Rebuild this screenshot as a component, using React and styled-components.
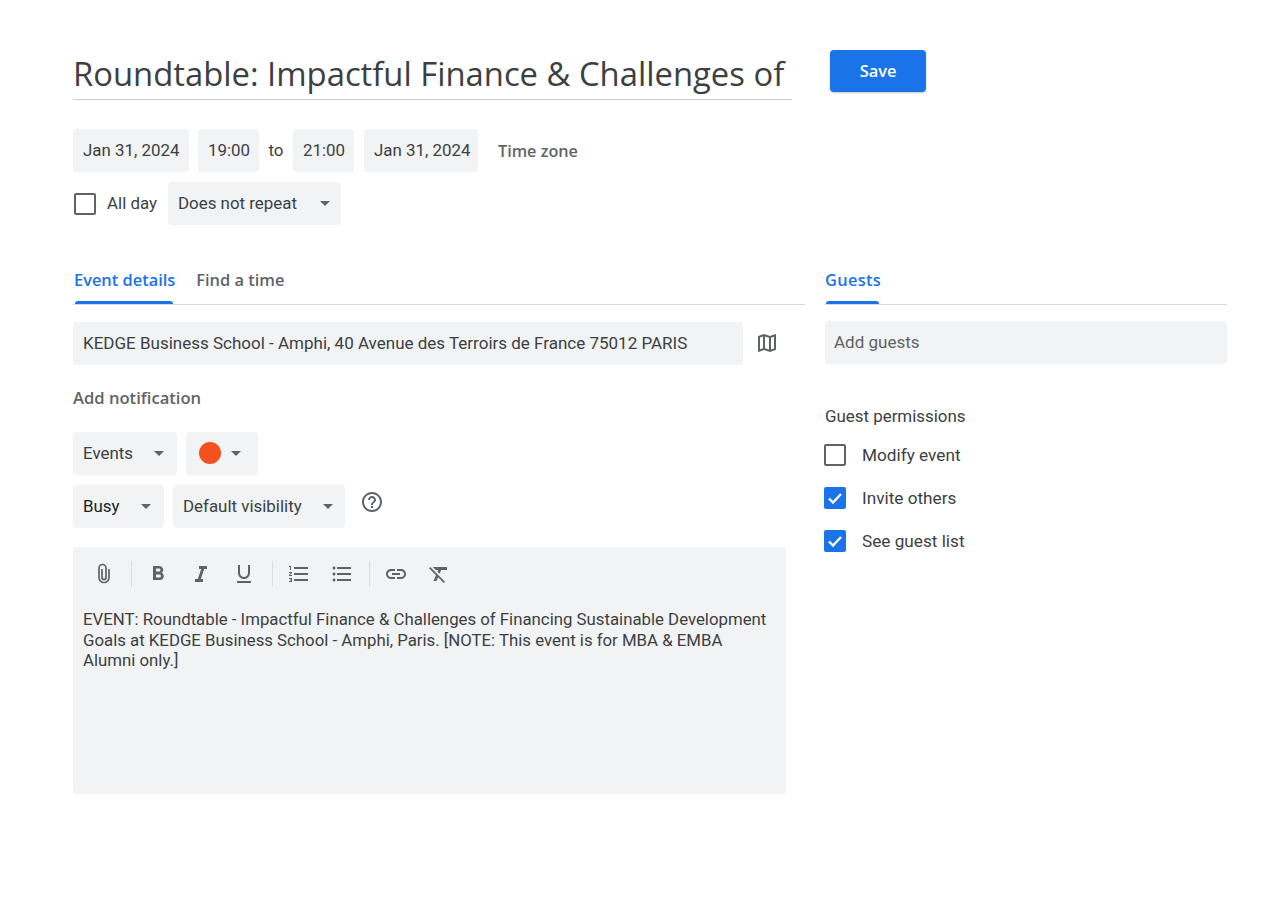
import React from 'react';
import styled, { createGlobalStyle } from 'styled-components';

const Global = createGlobalStyle`
  html, body { margin: 0; background: #fff; }
  body { font-family: Roboto, "Liberation Sans", sans-serif; color: #3c4043; }
`;

const Page = styled.div`
  width: 1285px;
  height: 900px;
  box-sizing: border-box;
  padding: 50px 58px 0 73px;
  overflow: hidden;
`;

const TitleRow = styled.div`
  display: flex;
  align-items: flex-start;
  gap: 38px;
`;

const Title = styled.div`
  width: 719px;
  height: 50px;
  box-sizing: border-box;
  border-bottom: 1px solid #c9cccf;
  font-family: "Open Sans", sans-serif;
  font-size: 32.8px;
  line-height: 47px;
  color: #3c4043;
  white-space: nowrap;
  overflow: hidden;
`;

const SaveButton = styled.button`
  width: 96px;
  height: 42px;
  border: 0;
  border-radius: 4px;
  background: #1a73e8;
  color: #fff;
  font-family: "Open Sans", sans-serif;
  font-size: 16.4px;
  font-weight: 600;
  padding: 0 0 2px;
  box-shadow: 0 1px 2px rgba(60, 64, 67, 0.3);
`;

const Row = styled.div`
  display: flex;
  align-items: center;
  gap: ${p => p.$gap ?? 9}px;
  margin-top: ${p => p.$top || 0}px;
`;

const Chip = styled.div`
  display: flex;
  align-items: center;
  justify-content: space-between;
  box-sizing: border-box;
  width: ${p => p.$w}px;
  height: 43px;
  margin-left: ${p => p.$left || 0}px;
  padding: 0 10px 1px 10px;
  background: #f1f3f4;
  border-radius: 4px;
  font-size: 16.9px;
  color: ${p => p.$dark ? '#202124' : '#3c4043'};
  white-space: nowrap;
`;

const Caret = styled.span`
  width: 0;
  height: 0;
  border-left: 5px solid transparent;
  border-right: 5px solid transparent;
  border-top: 5px solid #5f6368;
  margin-right: ${p => p.$right || 2}px;
`;

const To = styled.span`
  font-size: 16.9px;
  width: 16px;
  text-align: center;
  padding-bottom: 2px;
`;

const TextAction = styled.span`
  font-family: "Open Sans", sans-serif;
  font-size: 16.2px;
  font-weight: 600;
  color: #5f6368;
  margin-left: 11px;
`;

const Box = styled.span`
  display: flex;
  align-items: center;
  justify-content: center;
  flex: none;
  box-sizing: border-box;
  width: 22px;
  height: 22px;
  border-radius: 2px;
  border: 2px solid ${p => p.$on ? '#1a73e8' : '#5f6368'};
  background: ${p => p.$on ? '#1a73e8' : 'transparent'};
  margin-left: ${p => p.$left || 0}px;
  margin-right: ${p => p.$right || 0}px;
`;

const Label = styled.span`
  font-size: ${p => p.$size || 16.9}px;
  color: #3c4043;
  white-space: nowrap;
  margin-right: ${p => p.$right || 0}px;
  padding-bottom: ${p => p.$lift || 0}px;
`;

const Columns = styled.div`
  display: grid;
  grid-template-columns: 732px 402px;
  column-gap: 20px;
  margin-top: 37px;
`;

const Tabs = styled.div`
  display: flex;
  gap: 20px;
  height: 42px;
  border-bottom: 1px solid #d5d7da;
`;

const Tab = styled.div`
  position: relative;
  margin-left: ${p => p.$flush ? 0 : 1}px;
  font-family: "Open Sans", sans-serif;
  font-size: 16.4px;
  font-weight: 600;
  line-height: 36px;
  letter-spacing: ${p => p.$spread || 0}px;
  color: ${p => p.$active ? '#1a73e8' : '#5f6368'};
  &::after {
    content: '';
    display: ${p => p.$active ? 'block' : 'none'};
    position: absolute;
    left: 1px;
    right: 2px;
    bottom: 0;
    height: 3px;
    background: #1a73e8;
    border-radius: 3px 3px 0 0;
  }
`;

const LocationRow = styled.div`
  display: flex;
  align-items: center;
  margin-top: ${p => p.$top || 17}px;
`;

const Field = styled.div`
  display: flex;
  align-items: center;
  box-sizing: border-box;
  width: ${p => p.$w ? `${p.$w}px` : '100%'};
  height: 43px;
  padding: 0 10px ${p => p.$muted ? 2 : 1}px ${p => p.$muted ? 9 : 10}px;
  background: #f1f3f4;
  border-radius: 4px;
  font-size: 17px;
  color: ${p => p.$muted ? '#5f6368' : '#3c4043'};
  white-space: nowrap;
`;

const IconSlot = styled.span`
  display: flex;
  color: #5f6368;
  margin-left: ${p => p.$left || 0}px;
  margin-top: ${p => p.$up ? -p.$up : 0}px;
`;

const Notification = styled.div`
  font-family: "Open Sans", sans-serif;
  font-size: 16.6px;
  font-weight: 600;
  color: #5f6368;
  margin-top: 22px;
  line-height: 22px;
`;

const Dot = styled.span`
  width: 22px;
  height: 22px;
  border-radius: 50%;
  background: #f4511e;
  margin-left: 3px;
`;

const Editor = styled.div`
  width: 713px;
  height: 247px;
  box-sizing: border-box;
  margin-top: 19px;
  padding: 0 10px;
  background: #f1f3f4;
  border-radius: 4px;
`;

const Toolbar = styled.div`
  display: flex;
  align-items: center;
  height: 54px;
  padding-left: 9px;
`;

const Tool = styled.span`
  display: flex;
  align-items: center;
  justify-content: center;
  width: 24px;
  height: 24px;
  margin-right: ${p => p.$gap || 19}px;
  color: #5f6368;
`;

const Sep = styled.span`
  width: 1px;
  height: 26px;
  background: #dadce0;
  margin-right: ${p => p.$gap || 14}px;
`;

const Body = styled.div`
  width: 690px;
  margin-top: 8px;
  font-size: 16.8px;
  line-height: 20.5px;
  color: #3c4043;
`;

const PermTitle = styled.div`
  font-size: 16.9px;
  line-height: 20px;
  margin-top: 42px;
  color: #3c4043;
`;

const Perm = styled.div`
  display: flex;
  align-items: center;
  gap: 16px;
  height: 22px;
  margin-top: ${p => p.$top || 21}px;
`;

const Check = () => (
  <svg width="16" height="16" viewBox="0 0 16 16" fill="none">
    <path d="M2 8.5l4 4L14 4" stroke="#fff" strokeWidth="2.4" />
  </svg>
);

const Stroke = ({ children, size = 24 }) => (
  <svg width={size} height={size} viewBox="0 0 24 24" fill="currentColor">{children}</svg>
);

export default function App() {
  return (
    <Page>
      <Global />
      <TitleRow>
        <Title>Roundtable: Impactful Finance &amp; Challenges of</Title>
        <SaveButton>Save</SaveButton>
      </TitleRow>

      <Row $top={29}>
        <Chip $w={116}>Jan 31, 2024</Chip>
        <Chip $w={61}>19:00</Chip>
        <To>to</To>
        <Chip $w={61}>21:00</Chip>
        <Chip $w={114} $left={1}>Jan 31, 2024</Chip>
        <TextAction>Time zone</TextAction>
      </Row>

      <Row $top={10} $gap={0}>
        <Box $left={1} $right={11} />
        <Label $right={11} $lift={2}>All day</Label>
        <Chip $w={173}>Does not repeat<Caret $right={1} /></Chip>
      </Row>

      <Columns>
        <div>
          <Tabs>
            <Tab $active>Event details</Tab>
            <Tab>Find a time</Tab>
          </Tabs>
          <LocationRow>
            <Field $w={670}>KEDGE Business School - Amphi, 40 Avenue des Terroirs de France 75012 PARIS</Field>
            <IconSlot $left={12} $up={1}>
              <Stroke>
                <path d="M20.5 3l-.16.03L15 5.1 9 3 3.36 4.9c-.21.07-.36.25-.36.48V20.5c0 .28.22.5.5.5l.16-.03L9 18.9l6 2.1 5.64-1.9c.21-.07.36-.25.36-.48V3.5c0-.28-.22-.5-.5-.5zM10 5.47l4 1.4v11.66l-4-1.4V5.47zm-5 .99l3-1.01v11.7l-3 1.16V6.46zm14 11.08l-3 1.01V6.86l3-1.16v11.84z" />
              </Stroke>
            </IconSlot>
          </LocationRow>
          <Notification>Add notification</Notification>
          <Row $top={23}>
            <Chip $w={104}>Events<Caret $right={3} /></Chip>
            <Chip $w={72}><Dot /><Caret $right={7} /></Chip>
          </Row>
          <Row $top={10}>
            <Chip $w={91} $dark>Busy<Caret $right={3} /></Chip>
            <Chip $w={172}>Default visibility<Caret $right={0} /></Chip>
            <IconSlot $left={6} $up={10}>
              <Stroke>
                <path d="M11 18h2v-2h-2v2zm1-16C6.48 2 2 6.48 2 12s4.48 10 10 10 10-4.48 10-10S17.52 2 12 2zm0 18c-4.41 0-8-3.59-8-8s3.59-8 8-8 8 3.59 8 8-3.59 8-8 8zm0-14c-2.21 0-4 1.79-4 4h2c0-1.1.9-2 2-2s2 .9 2 2c0 2-3 1.75-3 5h2c0-2.25 3-2.5 3-5 0-2.21-1.79-4-4-4z" />
              </Stroke>
            </IconSlot>
          </Row>
          <Editor>
            <Toolbar>
              <Tool $gap={15}>
                <Stroke>
                  <path d="M17 7V15.5a5 5 0 0 1-10 0V6a3.5 3.5 0 0 1 7 0V15.5a2 2 0 0 1-4 0V7" fill="none" stroke="currentColor" strokeWidth="1.7" />
                </Stroke>
              </Tool>
              <Sep />
              <Tool>
                <Stroke>
                  <path d="M15.6 10.79c.97-.67 1.65-1.77 1.65-2.79 0-2.26-1.75-4-4-4H7v14h7.04c2.09 0 3.71-1.7 3.71-3.79 0-1.52-.86-2.82-2.15-3.42zM10 6.5h3c.83 0 1.5.67 1.5 1.5s-.67 1.5-1.5 1.5h-3v-3zm3.5 9H10v-3h3.5c.83 0 1.5.67 1.5 1.5s-.67 1.5-1.5 1.5z" />
                </Stroke>
              </Tool>
              <Tool>
                <Stroke><path d="M10 4v3h2.21l-3.42 10H6v3h8v-3h-2.21l3.42-10H18V4z" /></Stroke>
              </Tool>
              <Tool $gap={16}>
                <Stroke>
                  <path d="M12 17c3.31 0 6-2.69 6-6V3h-2V11c0 2.2-1.8 4-4 4S8 13.2 8 11V3H6v8c0 3.31 2.69 6 6 6zm-7 2v2h14v-2H5z" />
                </Stroke>
              </Tool>
              <Sep $gap={14} />
              <Tool>
                <Stroke>
                  <path d="M2 17h2v.5H3v1h1v.5H2v1h3v-4H2v1zm1-9h1V4H2v1h1v3zm-1 3h1.8L2 13.1v.9h3v-1H3.2L5 10.9V10H2v1zm5-6v2h14V5H7zm0 14h14v-2H7v2zm0-6h14v-2H7v2z" />
                </Stroke>
              </Tool>
              <Tool $gap={15}>
                <Stroke>
                  <path d="M4 10.5c-.83 0-1.5.67-1.5 1.5s.67 1.5 1.5 1.5 1.5-.67 1.5-1.5-.67-1.5-1.5-1.5zm0-6c-.83 0-1.5.67-1.5 1.5S3.17 7.5 4 7.5 5.5 6.83 5.5 6 4.83 4.5 4 4.5zm0 12c-.83 0-1.5.68-1.5 1.5s.68 1.5 1.5 1.5 1.5-.68 1.5-1.5-.67-1.5-1.5-1.5zM7 19h14v-2H7v2zm0-6h14v-2H7v2zm0-8v2h14V5H7z" />
                </Stroke>
              </Tool>
              <Sep />
              <Tool>
                <Stroke>
                  <path d="M3.9 12c0-1.71 1.39-3.1 3.1-3.1h4V7H7c-2.76 0-5 2.24-5 5s2.24 5 5 5h4v-1.9H7c-1.71 0-3.1-1.39-3.1-3.1zM8 13h8v-2H8v2zm9-6h-4v1.9h4c1.71 0 3.1 1.39 3.1 3.1s-1.39 3.1-3.1 3.1h-4V17h4c2.76 0 5-2.24 5-5s-2.24-5-5-5z" />
                </Stroke>
              </Tool>
              <Tool>
                <Stroke>
                  <path d="M3.27 5L2 6.27l6.97 6.97L6.5 19h3l1.57-3.66L16.73 21 18 19.73 3.55 5.27 3.27 5zM6 5v.18L8.82 8h2.4l-.72 1.68 2.1 2.1L14.21 8H20V5H6z" />
                </Stroke>
              </Tool>
            </Toolbar>
            <Body>
              EVENT: Roundtable - Impactful Finance &amp; Challenges of Financing Sustainable Development Goals at KEDGE Business School - Amphi, Paris. [NOTE: This event is for MBA &amp; EMBA Alumni only.]
            </Body>
          </Editor>
        </div>

        <div>
          <Tabs>
            <Tab $active $flush $spread={0.3}>Guests</Tab>
          </Tabs>
          <LocationRow $top={16}>
            <Field $muted>Add guests</Field>
          </LocationRow>
          <PermTitle>Guest permissions</PermTitle>
          <Perm $top={18}><Box $left={-1} /><Label $size={17.2}>Modify event</Label></Perm>
          <Perm><Box $left={-1} $on><Check /></Box><Label $size={17.2}>Invite others</Label></Perm>
          <Perm><Box $left={-1} $on><Check /></Box><Label $size={17.2}>See guest list</Label></Perm>
        </div>
      </Columns>
    </Page>
  );
}
